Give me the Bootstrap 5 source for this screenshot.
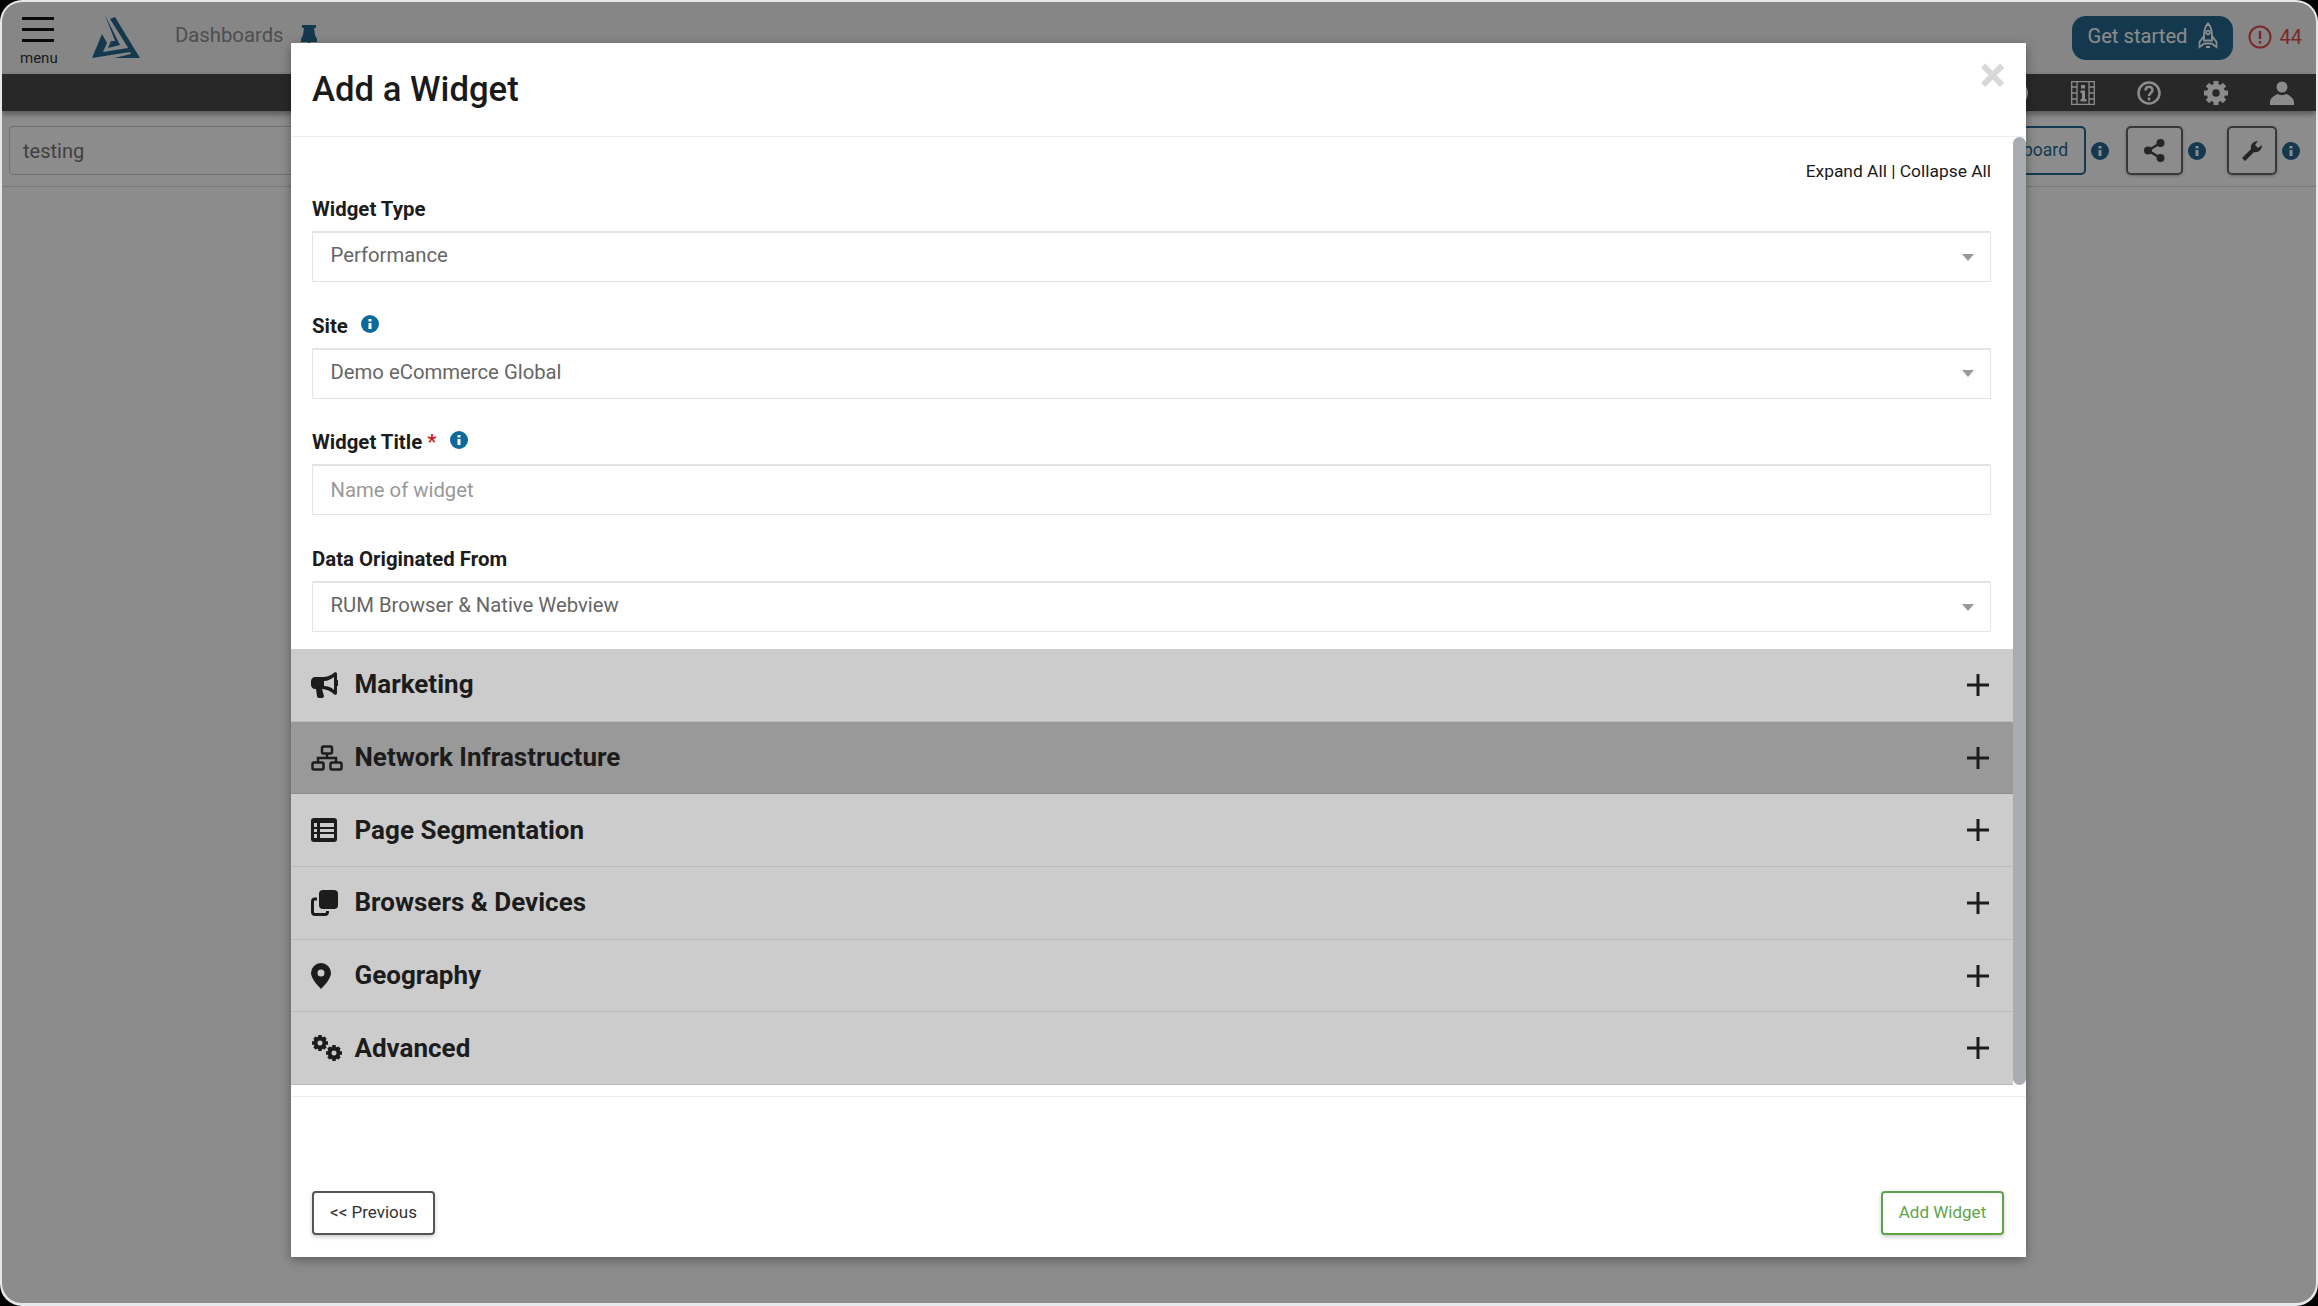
<!DOCTYPE html>
<html lang="en">
<head>
    <meta charset="UTF-8">
    <title>Add a Widget</title>
    <link href="https://cdn.jsdelivr.net/npm/bootstrap@5.3.2/dist/css/bootstrap.min.css" rel="stylesheet">
    <style>
        html { background: #000; }
        body {
            height: 1306px;
            overflow: hidden;
            padding: 2px 2px 3px 2px;
            background: #e6e8ea;
            border-radius: 22px;
            font-family: Roboto, "Liberation Sans", sans-serif;
        }
        .app-frame {
            position: relative;
            height: 100%;
            overflow: hidden;
            border-radius: 20px;
            background: #fff;
        }
        /* page behind the modal */
        .top-strip { height: 72px; padding: 0 14px 0 18px; background: #f4f4f4; }
        .burger { width: 36px; padding-top: 7px; }
        .burger span { display: block; width: 32px; height: 3px; margin: 0 auto 8px; background: #111; }
        .burger small { display: block; margin-top: 9px; font-size: 15px; line-height: 15px; text-align: center; color: #333; }
        .logo-mark { width: 50px; height: 46px; margin-left: 35px; }
        .crumb { margin-left: 34px; margin-bottom: 5px; font-size: 20.3px; color: #8f8f8f; }
        .pin-mark { width: 16px; height: 26px; margin-left: 17px; }
        .start-btn {
            height: 44px;
            padding: 0 15px 3px;
            gap: 10px;
            border-radius: 14px;
            background: #26688f;
            color: #fff;
            font-size: 20.2px;
        }
        .alert-count { margin-left: 15px; margin-bottom: 3px; font-size: 20px; color: #e04a4a; }
        .dark-strip { height: 37px; padding-right: 22px; background: #494949; gap: 42.5px; box-shadow: 0 3px 6px rgba(0,0,0,.4); }
        .tool-row { height: 76px; padding: 15px 16px 0 7px; border-bottom: 1px solid #ddd; }
        .name-box { width: 400px; height: 49px; padding: 0 13px; border: 1px solid #ccc; border-radius: 4px; font-size: 20px; line-height: 49px; color: #777; }
        .board-btn { width: 100px; height: 49px; padding: 0 16px; border: 2.5px solid #26688f; border-radius: 5px; font-size: 17.5px; line-height: 44px; color: #26688f; text-align: right; }
        .tool-btn { height: 49px; border: 2.5px solid #666; border-radius: 5px; box-shadow: 0 1px 3px rgba(0,0,0,.25); }
        .share-btn { width: 57px; margin-left: 17px; }
        .wrench-btn { width: 50px; margin-left: 21px; }
        .info-dot { display: inline-block; width: 18px; height: 18px; flex: none; }
        .tool-row .info-dot { margin-left: 5px; }
        /* modal */
        .modal-backdrop.show { position: absolute; width: 100%; height: 100%; background: #000; opacity: .45; }
        .modal.widget-modal { position: absolute; display: block; overflow: hidden; }
        .widget-modal .modal-dialog { width: 1735px; max-width: none; margin: 41px 0 0 289px; }
        .widget-modal .modal-content { height: 1214px; border: 0; border-radius: 0; box-shadow: 0 3px 10px rgba(0,0,0,.35); color: #1c1c1c; }
        .widget-modal .modal-header { height: 94px; padding: 0 21px; align-items: center; border-bottom: 1px solid #eee; border-radius: 0; }
        .widget-modal .modal-title { font-size: 34.7px; font-weight: 500; line-height: 1; color: #1a1a1a; margin-top: -1px; }
        .close-x { position: absolute; top: 7px; right: 20px; font-size: 50px; line-height: 1; font-weight: 700; color: #d8d8d8; }
        .scroll-pane { position: relative; height: 960px; padding-right: 13px; border-bottom: 1px solid #eee; }
        .scroll-thumb { position: absolute; top: 0; right: 0; width: 13px; height: 948px; border-radius: 7px; background: #a8abaf; }
        .form-pane { height: 512px; padding: 24px 22px 0 21px; }
        .expand-links { font-size: 17.4px; line-height: 20px; text-align: right; color: #1a1a1a; margin-bottom: 18px; }
        .field-label { display: block; margin-bottom: 11px; margin-top: -1px; font-size: 20.4px; font-weight: 700; line-height: 22px; }
        .field-label .req { color: #d01818; }
        .field-gap { margin-bottom: 33.7px; }
        .widget-modal .form-select, .widget-modal .form-control {
            height: 51px;
            padding: 0 17.5px;
            border: 2px solid #e4e4e4;
            border-width: 2px 1px 1px;
            border-radius: 1px;
            font-size: 20.3px;
            color: #666;
        }
        .widget-modal .form-select {
            padding-bottom: 3px;
            background-image: url("data:image/svg+xml,%3Csvg xmlns='http://www.w3.org/2000/svg' viewBox='0 0 12 7'%3E%3Cpath fill='%23999' d='M0 0h12L6 7z'/%3E%3C/svg%3E");
            background-position: right 16px center;
            background-size: 12px 7px;
        }
        .widget-modal .form-control::placeholder { color: #999; }
        .section-row {
            height: 72.7px;
            padding: 0 24px 0 20px;
            border-bottom: 1px solid #bbb;
            background: #ccc;
            font-size: 26px;
            font-weight: 700;
            color: #1c1c1c;
        }
        .section-row.is-hover { background: #999; border-bottom-color: #8e8e8e; }
        .section-icon { display: flex; width: 43.5px; flex: none; }
        .plus-mark { width: 22px; height: 22px; margin-left: auto; }
        .foot-row { padding: 94px 22px 0 21px; }
        .foot-btn { width: 123px; height: 44px; padding: 0; border-radius: 4px; background: #fff; font-size: 17px; box-shadow: 0 2px 4px rgba(0,0,0,.2); }
        .foot-prev { border: 2.5px solid #555; color: #333; }
        .foot-add { border: 2.5px solid #5ea548; color: #5ea548; }
    </style>
</head>
<body>
<div class="app-frame">
    <!-- page behind -->
    <div class="top-strip d-flex align-items-center">
        <div class="burger">
            <span></span><span></span><span class="mb-0"></span>
            <small>menu</small>
        </div>
        <svg class="logo-mark" viewBox="0 0 50 46"><path fill="#26688f" d="M14 0L29 30 17 33 20 26 24 26zM11 19L16 28 12 37 37 33 39 37 1 43zM19 4L24 2 49 43 23 43 40 39 36 31z"/></svg>
        <span class="crumb">Dashboards</span>
        <svg class="pin-mark" viewBox="0 0 16 26"><path fill="#26688f" d="M1 0h14v3h-2l1 7 2 4v3H9l-1 9-1-9H0v-3l2-4 1-7H1z"/></svg>
        <div class="ms-auto d-flex align-items-center">
            <div class="start-btn d-flex align-items-center">Get started
                <svg width="20" height="29" viewBox="0 0 20 29" fill="none" stroke="#fff" stroke-width="1.800"><path d="M10 1.500c3.500 3.500 4.500 9 4 17H6c-.5-8 .5-13.500 4-17zM6 14l-4.500 6v5l5-3.500h7l5 3.500v-5L14 14M8 25h4"/><circle cx="10" cy="10.500" r="1.800"/></svg>
            </div>
            <div class="alert-count d-flex align-items-center gap-2">
                <svg width="24" height="24" viewBox="0 0 24 24" fill="none" stroke="#e04a4a" stroke-width="2"><circle cx="12" cy="12" r="10.500"/><path stroke-width="2.500" d="M12 6v8M12 16v2.500"/></svg>44
            </div>
        </div>
    </div>
    <div class="dark-strip d-flex align-items-center justify-content-end">
        <svg width="24" height="24" viewBox="0 0 24 24" fill="none" stroke="#fff"><circle cx="12" cy="12" r="10.500" stroke-width="3"/></svg>
        <svg width="24" height="24" viewBox="0 0 24 24"><path fill="none" stroke="#fff" stroke-width="1.300" d="M.7.7h22.600v22.600H.7zM6 1v22M18 1v22M1 6h5M1 12h5M1 18h5M18 6h5M18 12h5M18 18h5"/><path fill="#fff" d="M10 4h4v3.500h-4zM9.500 9.500H14V18h1.500v2.500h-6V18H11v-6H9.500z"/></svg>
        <svg width="24" height="24" viewBox="0 0 24 24" fill="none" stroke="#fff" stroke-width="2.500"><circle cx="12" cy="12" r="10.500"/><path d="M8.500 9.500c0-5 7-5 7-.5 0 3-3.500 3-3.500 6M12 16.500v3"/></svg>
        <svg width="24" height="24" viewBox="0 0 24 24"><circle cx="12" cy="12" r="6.500" fill="none" stroke="#fff" stroke-width="5.500"/><path stroke="#fff" stroke-width="5" d="M12 0v4M12 20v4M0 12h4M20 12h4M3.500 3.500l3 3M17.500 17.500l3 3M3.500 20.500l3-3M17.500 6.500l3-3"/></svg>
        <svg width="24" height="24" viewBox="0 0 24 24" fill="#fff"><circle cx="12" cy="6" r="5.500"/><path d="M0 24v-3c0-4 5-7 8-8 2 1.500 6 1.500 8 0 3 1 8 4 8 8v3z"/></svg>
    </div>
    <div class="tool-row d-flex align-items-start">
        <div class="name-box">testing</div>
        <div class="ms-auto d-flex align-items-center">
            <div class="board-btn">board</div>
            <svg class="info-dot" viewBox="0 0 18 18"><circle cx="9" cy="9" r="9" fill="#26688f"/><path stroke="#fff" stroke-width="3" d="M9 4v2.500M9 8v6"/></svg>
            <div class="tool-btn share-btn d-flex align-items-center justify-content-center">
                <svg width="21" height="23" viewBox="0 0 21 23" fill="#444"><circle cx="16.500" cy="4" r="4"/><circle cx="4" cy="11.500" r="4"/><circle cx="16.500" cy="19" r="4"/><path fill="none" stroke="#444" stroke-width="2.500" d="M16.500 4L4 11.500 16.500 19"/></svg>
            </div>
            <svg class="info-dot" viewBox="0 0 18 18"><circle cx="9" cy="9" r="9" fill="#26688f"/><path stroke="#fff" stroke-width="3" d="M9 4v2.500M9 8v6"/></svg>
            <div class="tool-btn wrench-btn d-flex align-items-center justify-content-center">
                <svg width="20" height="20" viewBox="0 0 20 20" fill="#444"><path d="M0 17l9-9c-1-4 2-8 7-8l-3 4 3 3 4-3c0 5-4 8-8 7l-9 9z"/></svg>
            </div>
            <svg class="info-dot" viewBox="0 0 18 18"><circle cx="9" cy="9" r="9" fill="#26688f"/><path stroke="#fff" stroke-width="3" d="M9 4v2.500M9 8v6"/></svg>
        </div>
    </div>

    <div class="modal-backdrop show"></div>

    <div class="modal widget-modal">
        <div class="modal-dialog">
            <div class="modal-content">
                <div class="modal-header">
                    <h5 class="modal-title">Add a Widget</h5>
                    <span class="close-x">&times;</span>
                </div>
                <div class="scroll-pane">
                    <div class="scroll-thumb"></div>
                    <div class="form-pane">
                        <div class="expand-links">Expand All | Collapse All</div>
                        <div class="field-gap">
                            <label class="field-label">Widget Type</label>
                            <select class="form-select"><option>Performance</option></select>
                        </div>
                        <div class="field-gap">
                            <label class="field-label">Site <svg class="info-dot ms-2 align-top" viewBox="0 0 18 18"><circle cx="9" cy="9" r="9" fill="#0f6a9c"/><path stroke="#fff" stroke-width="3" d="M9 4v2.500M9 8v6"/></svg></label>
                            <select class="form-select"><option>Demo eCommerce Global</option></select>
                        </div>
                        <div class="field-gap">
                            <label class="field-label">Widget Title <span class="req">*</span> <svg class="info-dot ms-2 align-top" viewBox="0 0 18 18"><circle cx="9" cy="9" r="9" fill="#0f6a9c"/><path stroke="#fff" stroke-width="3" d="M9 4v2.500M9 8v6"/></svg></label>
                            <input class="form-control" placeholder="Name of widget">
                        </div>
                        <div>
                            <label class="field-label">Data Originated From</label>
                            <select class="form-select"><option>RUM Browser &amp; Native Webview</option></select>
                        </div>
                    </div>
                    <div class="section-row d-flex align-items-center">
                        <span class="section-icon"><svg width="27" height="26" viewBox="0 0 27 26" fill="#1c1c1c"><path d="M24 0l2 1v7a3 3 0 0 1 0 6v8l-2 1c-4-4-9-6-13-6l2 7c0 1-1 2-2 2H8c-1 0-2-1-2-2l-1-7H4c-2 0-4-2-4-4V9c0-2 2-4 4-4h7c4 0 9-1 13-5zm-1 5c-3 2-6 4-10 4v5c4 0 7 1 10 4z" fill-rule="evenodd"/></svg></span>
                        Marketing
                        <svg class="plus-mark" viewBox="0 0 22 22"><path stroke="#1c1c1c" stroke-width="3" d="M11 0v22M0 11h22"/></svg>
                    </div>
                    <div class="section-row is-hover d-flex align-items-center">
                        <span class="section-icon"><svg width="32" height="26" viewBox="0 0 32 26" fill="none" stroke="#1c1c1c" stroke-width="2.500"><rect x="11" y="1.500" width="10" height="7" rx="1.500"/><rect x="1.500" y="17.500" width="11" height="7" rx="1.500"/><rect x="19.500" y="17.500" width="11" height="7" rx="1.500"/><path d="M16 9v4M7 17v-4h18v4"/></svg></span>
                        Network Infrastructure
                        <svg class="plus-mark" viewBox="0 0 22 22"><path stroke="#1c1c1c" stroke-width="3" d="M11 0v22M0 11h22"/></svg>
                    </div>
                    <div class="section-row d-flex align-items-center">
                        <span class="section-icon"><svg width="26" height="24" viewBox="0 0 26 24"><path fill="#1c1c1c" fill-rule="evenodd" d="M3 0h20a3 3 0 0 1 3 3v18a3 3 0 0 1-3 3H3a3 3 0 0 1-3-3V3a3 3 0 0 1 3-3zm0 5v4h3V5zm6 0v4h14V5zm-6 6v3h3v-3zm6 0v3h14v-3zm-6 5v4h3v-4zm6 0v4h14v-4z"/></svg></span>
                        Page Segmentation
                        <svg class="plus-mark" viewBox="0 0 22 22"><path stroke="#1c1c1c" stroke-width="3" d="M11 0v22M0 11h22"/></svg>
                    </div>
                    <div class="section-row d-flex align-items-center">
                        <span class="section-icon"><svg width="27" height="26" viewBox="0 0 27 26"><rect x="8" y="0" width="19" height="19" rx="4" fill="#1c1c1c"/><path fill="none" stroke="#1c1c1c" stroke-width="3" d="M6 9H4a2.500 2.500 0 0 0-2.500 2.500V22A2.500 2.500 0 0 0 4 24.500h10a2.500 2.500 0 0 0 2.500-2.500v-1"/></svg></span>
                        Browsers &amp; Devices
                        <svg class="plus-mark" viewBox="0 0 22 22"><path stroke="#1c1c1c" stroke-width="3" d="M11 0v22M0 11h22"/></svg>
                    </div>
                    <div class="section-row d-flex align-items-center">
                        <span class="section-icon"><svg width="20" height="26" viewBox="0 0 20 26"><path fill="#1c1c1c" fill-rule="evenodd" d="M10 0a10 10 0 0 1 10 10c0 5-6 12-10 16C6 22 0 15 0 10A10 10 0 0 1 10 0zm0 6.500a3.500 3.500 0 1 0 0 7 3.500 3.500 0 0 0 0-7z"/></svg></span>
                        Geography
                        <svg class="plus-mark" viewBox="0 0 22 22"><path stroke="#1c1c1c" stroke-width="3" d="M11 0v22M0 11h22"/></svg>
                    </div>
                    <div class="section-row d-flex align-items-center">
                        <span class="section-icon"><svg width="32" height="26" viewBox="0 0 32 26" fill="none" stroke="#1c1c1c"><circle cx="9" cy="8" r="4.500" stroke-width="4"/><path stroke-width="3.500" d="M9 0v3M9 13v3M1 8h3M14 8h3M3.500 2.500l2 2M12.500 11.500l2 2M3.500 13.500l2-2M12.500 4.500l2-2"/><circle cx="23" cy="18" r="4.500" stroke-width="4"/><path stroke-width="3.500" d="M23 10v3M23 23v3M15 18h3M28 18h3M17.500 12.500l2 2M26.500 21.500l2 2M17.500 23.500l2-2M26.500 14.500l2-2"/></svg></span>
                        Advanced
                        <svg class="plus-mark" viewBox="0 0 22 22"><path stroke="#1c1c1c" stroke-width="3" d="M11 0v22M0 11h22"/></svg>
                    </div>
                </div>
                <div class="foot-row d-flex justify-content-between">
                    <button class="foot-btn foot-prev">&lt;&lt; Previous</button>
                    <button class="foot-btn foot-add">Add Widget</button>
                </div>
            </div>
        </div>
    </div>
</div>
<script src="https://cdn.jsdelivr.net/npm/bootstrap@5.3.2/dist/js/bootstrap.bundle.min.js"></script>
</body>
</html>
